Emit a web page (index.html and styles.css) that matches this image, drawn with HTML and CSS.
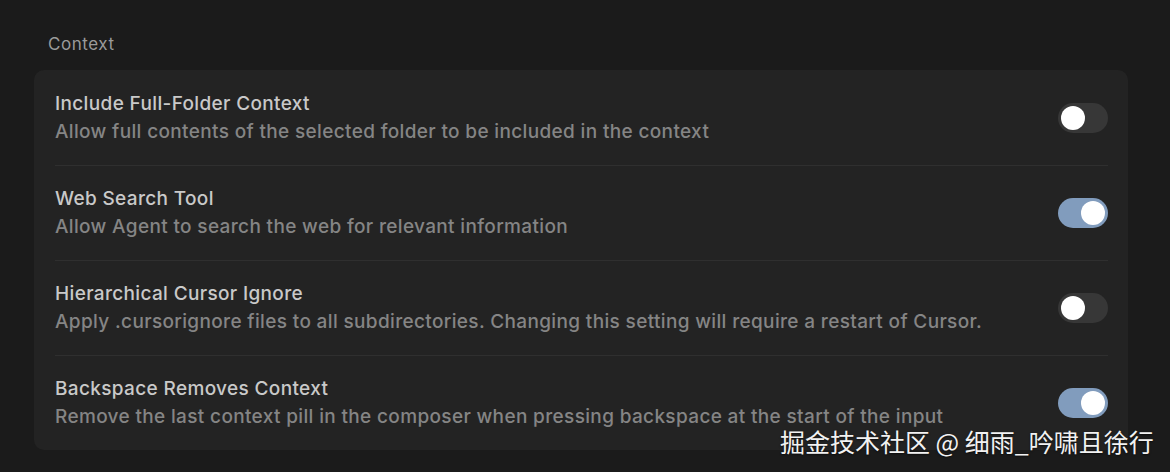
FILE: index.html
```html
<!DOCTYPE html>
<html>
<head>
<meta charset="utf-8">
<link rel="stylesheet" href="styles.css">
</head>
<body>
<div class="page">
  <div class="section-label">Context</div>
  <div class="card">
    <div class="row">
      <div class="text">
        <div class="title">Include Full-Folder Context</div>
        <div class="desc">Allow full contents of the selected folder to be included in the context</div>
      </div>
      <div class="toggle"><div class="knob"></div></div>
    </div>
    <div class="row">
      <div class="text">
        <div class="title">Web Search Tool</div>
        <div class="desc">Allow Agent to search the web for relevant information</div>
      </div>
      <div class="toggle on"><div class="knob"></div></div>
    </div>
    <div class="row">
      <div class="text">
        <div class="title">Hierarchical Cursor Ignore</div>
        <div class="desc">Apply .cursorignore files to all subdirectories. Changing this setting will require a restart of Cursor.</div>
      </div>
      <div class="toggle"><div class="knob"></div></div>
    </div>
    <div class="row">
      <div class="text">
        <div class="title">Backspace Removes Context</div>
        <div class="desc">Remove the last context pill in the composer when pressing backspace at the start of the input</div>
      </div>
      <div class="toggle on"><div class="knob"></div></div>
    </div>
  </div>
  <div class="watermark">掘金技术社区 @ 细雨_吟啸且徐行</div>
</div>
</body>
</html>
```

FILE: styles.css
```css
* { box-sizing: border-box; }
html, body {
  margin: 0;
  padding: 0;
  background: #1b1b1b;
  width: 1170px;
  height: 472px;
  overflow: hidden;
}
body {
  font-family: Inter, "Noto Sans", sans-serif;
  -webkit-font-smoothing: antialiased;
}
.page {
  position: relative;
  padding: 33px 42px 0 34px;
  height: 472px;
}
.section-label {
  padding-left: 14px;
  font-size: 17px;
  letter-spacing: 0.55px;
  line-height: 22px;
  color: #9a9a9a;
  margin-bottom: 15px;
}
.card {
  width: 1094px;
  background: #232323;
  border-radius: 10px;
  padding: 0 20px 0 21px;
}
.row {
  display: flex;
  align-items: center;
  justify-content: space-between;
  padding: 19px 0 19px;
  border-bottom: 1px solid #2f2f2f;
}
.row:first-child {
  padding-top: 20px;
}
.row:last-child {
  border-bottom: none;
}
.title {
  font-size: 19px;
  line-height: 28px;
  letter-spacing: 0.35px;
  font-weight: 500;
  color: #c9c9c9;
}
.desc {
  font-size: 19px;
  line-height: 28px;
  letter-spacing: 0.35px;
  font-weight: 500;
  color: #858585;
}
.toggle {
  width: 50px;
  height: 30px;
  border-radius: 15px;
  background: #373737;
  display: flex;
  align-items: center;
  padding: 0 3px;
  flex-shrink: 0;
}
.toggle.on {
  background: #819cbd;
  justify-content: flex-end;
}
.knob {
  width: 24px;
  height: 24px;
  border-radius: 50%;
  background: #ffffff;
}
.watermark {
  position: absolute;
  left: 780px;
  top: 424px;
  font-family: "Noto Sans CJK SC", sans-serif;
  font-size: 25px;
  line-height: 34px;
  color: #f2f2f2;
  text-shadow: 0 1px 2px rgba(0,0,0,0.6);
  white-space: nowrap;
}
```
